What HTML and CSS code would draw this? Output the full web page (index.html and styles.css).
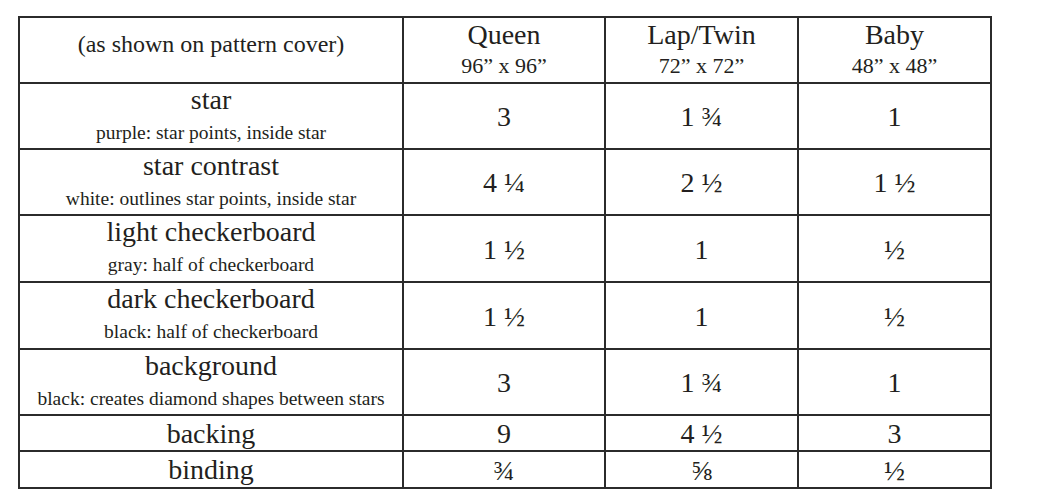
FILE: index.html
```html
<!DOCTYPE html>
<html lang="en">
<head>
<meta charset="utf-8">
<title>Fabric requirements</title>
<link rel="stylesheet" href="styles.css">
</head>
<body>
<div class="fabric" role="table">
  <div class="cell head-note">(as shown on pattern cover)</div>
  <div class="cell head"><div class="h">Queen</div><div class="dim">96” x 96”</div></div>
  <div class="cell head"><div class="h">Lap/Twin</div><div class="dim">72” x 72”</div></div>
  <div class="cell head"><div class="h">Baby</div><div class="dim">48” x 48”</div></div>

  <div class="cell label"><div class="h">star</div><div class="sub">purple: star points, inside star</div></div>
  <div class="cell num">3</div><div class="cell num">1 ¾</div><div class="cell num">1</div>

  <div class="cell label"><div class="h">star contrast</div><div class="sub">white: outlines star points, inside star</div></div>
  <div class="cell num">4 ¼</div><div class="cell num">2 ½</div><div class="cell num">1 ½</div>

  <div class="cell label"><div class="h">light checkerboard</div><div class="sub">gray: half of checkerboard</div></div>
  <div class="cell num">1 ½</div><div class="cell num">1</div><div class="cell num">½</div>

  <div class="cell label"><div class="h">dark checkerboard</div><div class="sub">black: half of checkerboard</div></div>
  <div class="cell num">1 ½</div><div class="cell num">1</div><div class="cell num">½</div>

  <div class="cell label"><div class="h">background</div><div class="sub">black: creates diamond shapes between stars</div></div>
  <div class="cell num">3</div><div class="cell num">1 ¾</div><div class="cell num">1</div>

  <div class="cell single">backing</div>
  <div class="cell num">9</div><div class="cell num">4 ½</div><div class="cell num">3</div>

  <div class="cell single">binding</div>
  <div class="cell num">¾</div><div class="cell num">⅝</div><div class="cell num">½</div>
</div>
</body>
</html>
```
FILE: styles.css
```css
html, body {
  margin: 0;
  padding: 0;
  background: #ffffff;
}
body {
  padding: 16px 0 0 18px;
  font-family: "Liberation Serif", "Times New Roman", serif;
  color: #231f20;
}
.fabric {
  display: grid;
  grid-template-columns: 384px 202px 193px 193px;
  grid-template-rows: 66px 66px 66px 67px 67px 66px 36px 37px;
  width: max-content;
  border-top: 2px solid #2b2b2b;
  border-left: 2px solid #2b2b2b;
}
.cell {
  box-sizing: border-box;
  border-right: 2px solid #2b2b2b;
  border-bottom: 2px solid #2b2b2b;
  text-align: center;
  white-space: nowrap;
}
.head-note {
  font-size: 24px;
  line-height: 28px;
  padding-top: 12px;
}
.head {
  padding-top: 2px;
}
.h {
  font-size: 28px;
  line-height: 30px;
}
.dim {
  font-size: 22px;
  line-height: 26px;
  margin-top: 3px;
}
.label {
  padding-top: 1px;
}
.sub {
  font-size: 19.5px;
  line-height: 30px;
  margin-top: 3px;
}
.single,
.num {
  display: flex;
  align-items: center;
  justify-content: center;
  font-size: 28px;
  line-height: 31px;
}
.num {
  padding-top: 1px;
}
```
